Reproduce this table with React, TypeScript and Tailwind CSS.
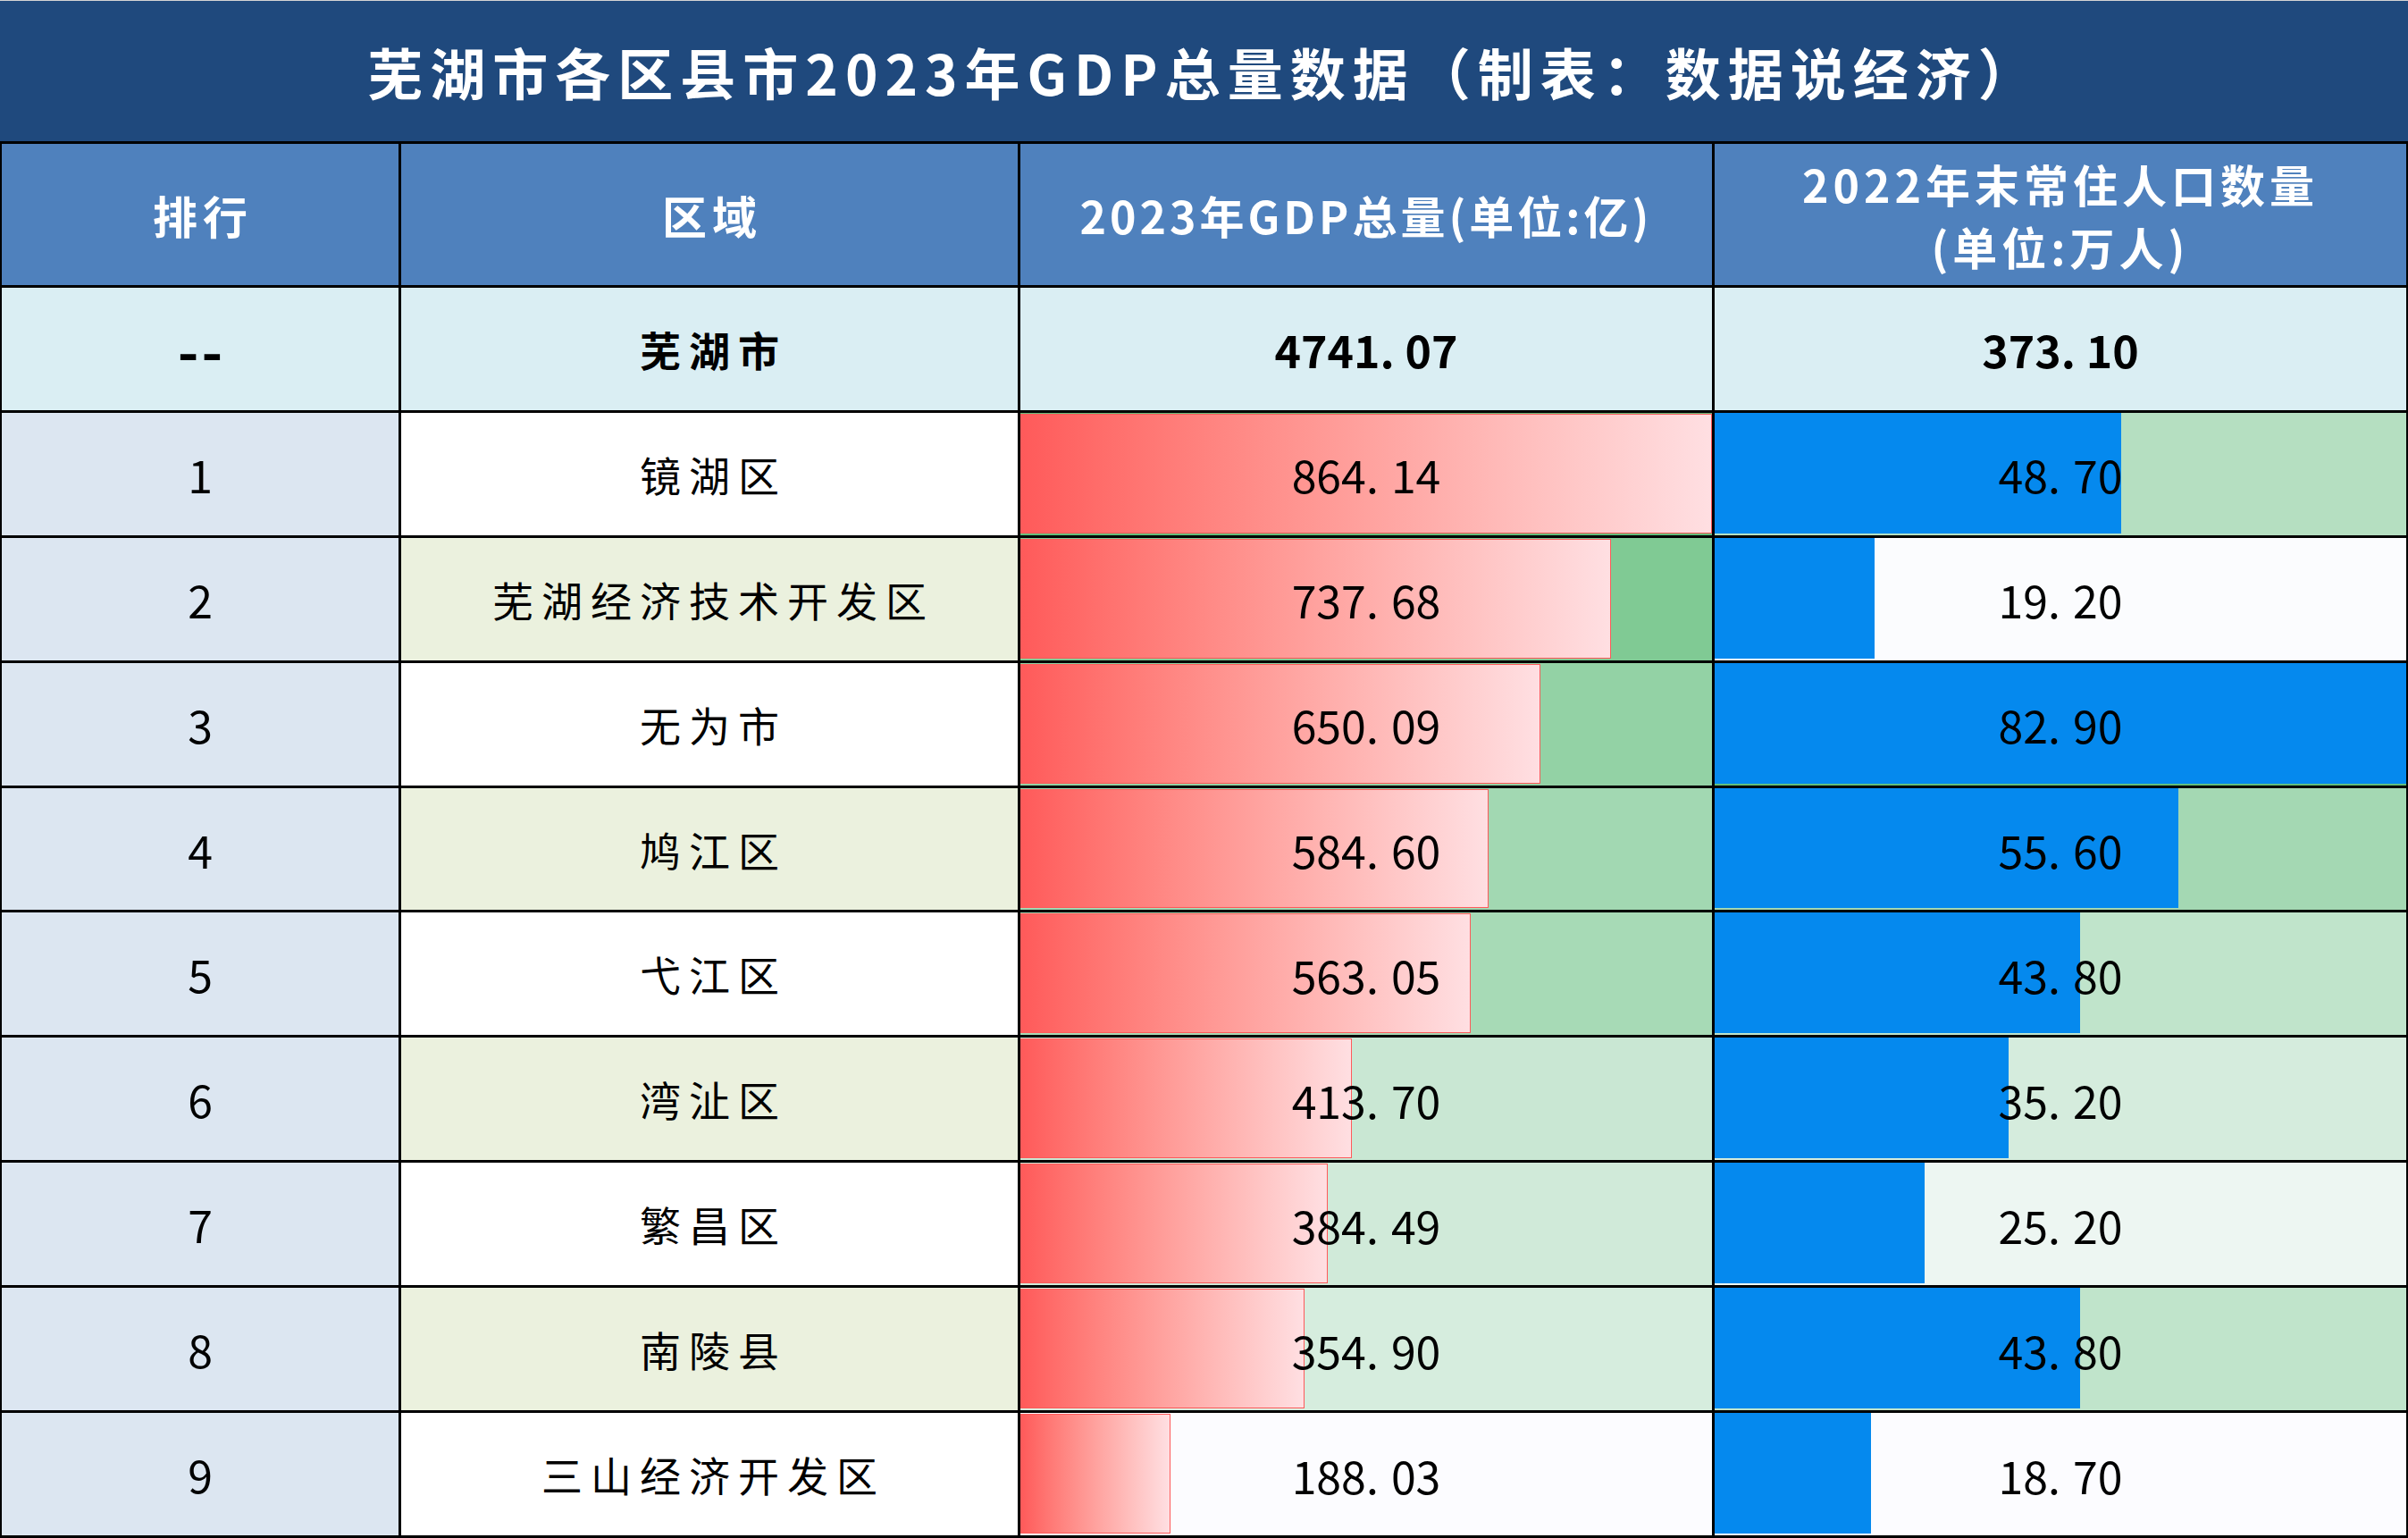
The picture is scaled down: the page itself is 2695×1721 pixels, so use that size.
import React from "react";

// 芜湖市各区县 GDP 表格
type Row = { rank: string; name: string; gdp: number; pop: number };

const rows: Row[] = [
  { rank: "1", name: "镜湖区", gdp: 864.14, pop: 48.7 },
  { rank: "2", name: "芜湖经济技术开发区", gdp: 737.68, pop: 19.2 },
  { rank: "3", name: "无为市", gdp: 650.09, pop: 82.9 },
  { rank: "4", name: "鸠江区", gdp: 584.6, pop: 55.6 },
  { rank: "5", name: "弋江区", gdp: 563.05, pop: 43.8 },
  { rank: "6", name: "湾沚区", gdp: 413.7, pop: 35.2 },
  { rank: "7", name: "繁昌区", gdp: 384.49, pop: 25.2 },
  { rank: "8", name: "南陵县", gdp: 354.9, pop: 43.8 },
  { rank: "9", name: "三山经济开发区", gdp: 188.03, pop: 18.7 },
];

const gdpMax = Math.max(...rows.map((r) => r.gdp));
const gdpMin = Math.min(...rows.map((r) => r.gdp));
const popMax = Math.max(...rows.map((r) => r.pop));
const popMin = Math.min(...rows.map((r) => r.pop));

// excel style 2-colour scale: min -> #FCFCFF, max -> #63BE7B
const scale = (v: number, min: number, max: number) => {
  const t = (v - min) / (max - min);
  const r = Math.round(252 + (99 - 252) * t);
  const g = Math.round(252 + (190 - 252) * t);
  const b = Math.round(255 + (123 - 255) * t);
  return `rgb(${r}, ${g}, ${b})`;
};

const Num = ({ value, bold }: { value: number; bold?: boolean }) => {
  const [a, b] = value.toFixed(2).split(".");
  return (
    <span
      className={`relative text-[50px] leading-none text-black ${
        bold ? "font-bold" : "font-normal"
      }`}
    >
      {a}
      <span className="inline-block w-[28px] text-left">.</span>
      {b}
    </span>
  );
};

const cjk = "font-['Noto_Sans_CJK_SC',sans-serif]";

export default function App() {
  return (
    <div
      className={`w-[2695px] h-[1721px] bg-black border-t border-[#d4d4d4] flex flex-col ${cjk}`}
    >
      {/* title */}
      <div className="h-[157px] bg-[#1f497d] flex items-center justify-center">
        <span className="text-white text-[62px] font-bold tracking-[8px] leading-none">
          芜湖市各区县市2023年GDP总量数据（制表：数据说经济）
        </span>
      </div>

      {/* header */}
      <div className="mt-[3px] px-[2px] h-[158px] grid grid-cols-[444px_690px_774px_774px] gap-x-[3px]">
        <div className="bg-[#4f81bd] flex items-center justify-center text-white text-[50px] font-bold tracking-[6px] pl-[6px]">
          排行
        </div>
        <div className="bg-[#4f81bd] flex items-center justify-center text-white text-[50px] font-bold tracking-[6px] pl-[6px]">
          区域
        </div>
        <div className="bg-[#4f81bd] flex items-center justify-center text-white text-[50px] font-bold tracking-[4px]">
          2023年GDP总量(单位:亿)
        </div>
        <div className="bg-[#4f81bd] flex flex-col items-center justify-center text-white text-[50px] font-bold tracking-[5px] leading-[70px]">
          <span>2022年末常住人口数量</span>
          <span>(单位:万人)</span>
        </div>
      </div>

      {/* data */}
      <div className="mt-[3px] px-[2px] h-[1396px] grid grid-cols-[444px_690px_774px_774px] grid-rows-10 gap-[3px]">
        {/* 芜湖市 total row */}
        <div className="bg-[#daeef3] flex items-center justify-center text-[64px] font-bold text-black tracking-[3px] pl-[3px]">
          --
        </div>
        <div className="bg-[#daeef3] flex items-center justify-center text-[46px] font-bold text-black tracking-[9px] pl-[9px]">
          芜湖市
        </div>
        <div className="bg-[#daeef3] flex items-center justify-center">
          <Num value={4741.07} bold />
        </div>
        <div className="bg-[#daeef3] flex items-center justify-center">
          <Num value={373.1} bold />
        </div>

        {rows.map((r, i) => (
          <React.Fragment key={r.rank}>
            <div className="bg-[#dce6f1] flex items-center justify-center text-[50px] text-black">
              {r.rank}
            </div>
            <div
              className={`${
                i % 2 === 1 ? "bg-[#ebf1de]" : "bg-white"
              } flex items-center justify-center text-[46px] text-black tracking-[9px] pl-[9px]`}
            >
              {r.name}
            </div>
            <div
              className="relative flex items-center justify-center"
              style={{ backgroundColor: scale(r.gdp, gdpMin, gdpMax) }}
            >
              <div
                className="absolute left-0 top-[1px] bottom-[2px] border border-[#ff5a5a] bg-linear-to-r from-[#ff5a5a] to-[#ffdfe2]"
                style={{ width: `${(r.gdp / gdpMax) * 100}%` }}
              />
              <Num value={r.gdp} />
            </div>
            <div
              className="relative flex items-center justify-center"
              style={{ backgroundColor: scale(r.pop, popMin, popMax) }}
            >
              <div
                className="absolute left-0 top-0 bottom-[2px] bg-[#0589ee]"
                style={{ width: `${(r.pop / popMax) * 100}%` }}
              />
              <Num value={r.pop} />
            </div>
          </React.Fragment>
        ))}
      </div>
    </div>
  );
}
